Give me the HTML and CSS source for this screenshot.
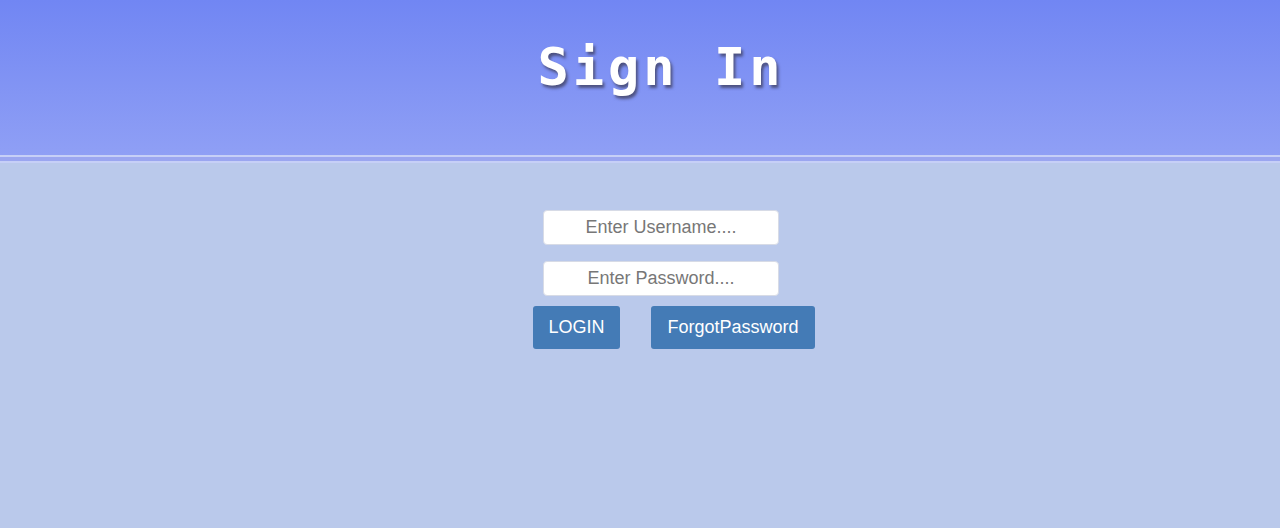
FILE: index.html
```html
<!DOCTYPE html>
<html>
<head>
<meta charset="utf-8">
<title>Sign In</title>
<link rel="stylesheet" href="styles.css">
</head>
<body>
<header class="top">
  <h1 class="title">Sign In</h1>
</header>
<div class="rule"></div>
<main class="form">
  <input class="field" type="text" placeholder="Enter Username....">
  <input class="field" type="password" placeholder="Enter Password....">
  <div class="actions">
    <button class="btn btn-login">LOGIN</button>
    <button class="btn btn-forgot">ForgotPassword</button>
  </div>
</main>
</body>
</html>
```

FILE: styles.css
```css
html, body {
  margin: 0;
  padding: 0;
}
body {
  background: #bac9eb;
  height: 528px;
  font-family: "Liberation Sans", Arial, sans-serif;
}
.top {
  height: 155px;
  background: linear-gradient(to bottom, #7186f3 0%, #8f9ff5 100%);
  display: flex;
  justify-content: center;
  padding-left: 42px;
  box-sizing: border-box;
}
.title {
  margin: 34px 0 0 0;
  font-family: "DejaVu Sans Mono", monospace;
  font-weight: bold;
  font-size: 52px;
  line-height: 66px;
  letter-spacing: 4px;
  color: #ffffff;
  text-shadow: 2px 3px 3px rgba(60, 60, 90, 0.75);
}
.rule {
  height: 4px;
  background: #9ba6f0;
  border-top: 2px solid #c6cff7;
  border-bottom: 2px solid #c6cff7;
}
.form {
  display: flex;
  flex-direction: column;
  align-items: center;
  padding-left: 42px;
  padding-top: 47px;
}
.field {
  width: 236px;
  height: 35px;
  box-sizing: border-box;
  border: 1px solid #d7dbe6;
  border-radius: 4px;
  background: #ffffff;
  text-align: center;
  font-family: "Liberation Sans", Arial, sans-serif;
  font-size: 18px;
  color: #333;
  margin-bottom: 16px;
  outline: none;
}
.field::placeholder {
  color: #777777;
}
.field + .field {
  margin-bottom: 10px;
}
.actions {
  display: flex;
  gap: 31px;
  padding-left: 26px;
}
.btn {
  height: 43px;
  border: none;
  border-radius: 3px;
  background: #447bb6;
  color: #ffffff;
  font-family: "Liberation Sans", Arial, sans-serif;
  font-size: 18px;
  padding: 0 15px;
}
.btn-login {
  width: 87px;
}
.btn-forgot {
  width: 164px;
}
```
